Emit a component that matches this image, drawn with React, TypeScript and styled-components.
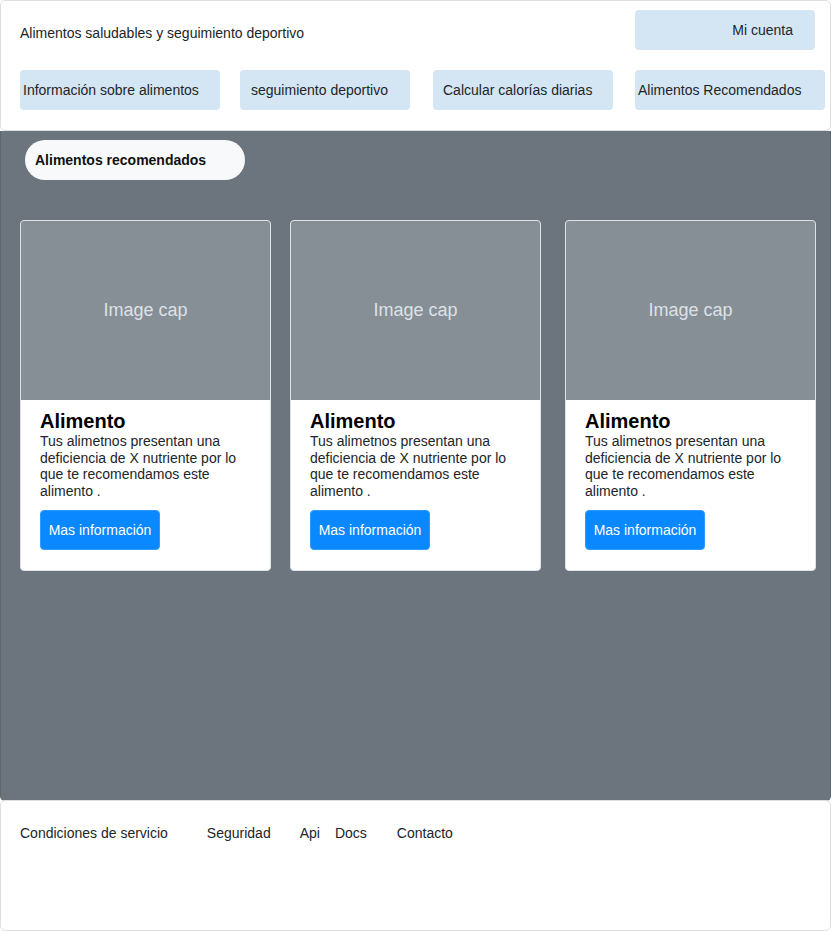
import React from "react";
import styled, { createGlobalStyle } from "styled-components";

const Global = createGlobalStyle`
  html, body { margin: 0; padding: 0; background: #ffffff; }
  body { font-family: "Liberation Sans", Arial, sans-serif; color: #212529; font-size: 14px; }
  * { box-sizing: border-box; }
`;

const Page = styled.div`
  width: 831px;
  display: flex;
  flex-direction: column;
`;

const Header = styled.header`
  height: 131px;
  background: #ffffff;
  border: 1px solid #dcdfe2;
  border-radius: 5px;
  display: flex;
  flex-direction: column;
`;

const TopRow = styled.div`
  display: flex;
  align-items: center;
  justify-content: space-between;
  padding: 9px 15px 0 19px;
  height: 49px;
`;

const Title = styled.div`
  font-size: 14px;
  margin-top: 5px;
`;

const NavRow = styled.nav`
  display: flex;
  margin-top: 20px;
  padding-left: 19px;
`;

const NavButton = styled.div<{ $w: number; $pl: number; $ml: number; $align?: string; $pr?: number }>`
  width: ${(p) => p.$w}px;
  height: 40px;
  margin-left: ${(p) => p.$ml}px;
  padding-left: ${(p) => p.$pl}px;
  padding-right: ${(p) => p.$pr ?? 0}px;
  background: #d4e6f4;
  border-radius: 4px;
  display: flex;
  align-items: center;
  justify-content: ${(p) => p.$align ?? "flex-start"};
  font-size: 14px;
  color: #212529;
  white-space: nowrap;
`;

const Main = styled.main`
  height: 670px;
  background: #6c757d;
  border: 1px solid #5f676e;
  border-top: none;
  border-radius: 0 0 5px 5px;
  padding: 9px 0 0 24px;
  display: flex;
  flex-direction: column;
`;

const Pill = styled.div`
  width: 220px;
  height: 40px;
  border-radius: 20px;
  background: #f8f9fa;
  font-weight: bold;
  font-size: 14px;
  display: flex;
  align-items: center;
  padding-left: 10px;
  color: #111;
`;

const Cards = styled.div`
  display: flex;
  margin-top: 40px;
  margin-left: -5px;
`;

const Card = styled.div<{ $ml: number }>`
  width: 251px;
  height: 351px;
  margin-left: ${(p) => p.$ml}px;
  background: #ffffff;
  border: 1px solid #dfe2e5;
  border-radius: 4px;
  overflow: hidden;
  display: flex;
  flex-direction: column;
`;

const ImageCap = styled.div`
  height: 179px;
  background: #868e96;
  color: #dee2e6;
  font-size: 18px;
  display: flex;
  align-items: center;
  justify-content: center;
`;

const CardBody = styled.div`
  padding: 9px 19px 20px 19px;
  display: flex;
  flex-direction: column;
  align-items: flex-start;
`;

const CardTitle = styled.h5`
  margin: 0;
  font-size: 20px;
  font-weight: bold;
  line-height: 24px;
  color: #000;
`;

const CardText = styled.p`
  margin: 0;
  font-size: 14px;
  line-height: 16.7px;
  color: #212529;
`;

const PrimaryButton = styled.button`
  margin-top: 10px;
  width: 120px;
  height: 40px;
  background: #0a88ff;
  color: #ffffff;
  border: 1px solid #2f9bff;
  border-radius: 4px;
  font-family: "Liberation Sans", Arial, sans-serif;
  font-size: 14px;
  padding: 0;
  cursor: pointer;
`;

const Footer = styled.footer`
  height: 131px;
  background: #ffffff;
  border: 1px solid #dcdfe2;
  border-radius: 5px;
  margin-top: -1px;
  padding: 24px 0 0 19px;
  display: flex;
  align-items: flex-start;
`;

const FooterLink = styled.a<{ $ml: number }>`
  margin-left: ${(p) => p.$ml}px;
  font-size: 14px;
  color: #212529;
  text-decoration: none;
  line-height: 17px;
`;

const navItems = [
  { label: "Información sobre alimentos", w: 200, pl: 3, ml: 0 },
  { label: "seguimiento deportivo", w: 170, pl: 11, ml: 20 },
  { label: "Calcular calorías diarias", w: 180, pl: 10, ml: 23 },
  { label: "Alimentos Recomendados", w: 190, pl: 3, ml: 22 },
];

const cardMargins = [0, 19, 24];

const footerLinks = [
  { label: "Condiciones de servicio", ml: 0 },
  { label: "Seguridad", ml: 39 },
  { label: "Api", ml: 29 },
  { label: "Docs", ml: 15 },
  { label: "Contacto", ml: 30 },
];

export default function App() {
  return (
    <Page>
      <Global />
      <Header>
        <TopRow>
          <Title>Alimentos saludables y seguimiento deportivo</Title>
          <NavButton $w={180} $pl={0} $pr={22} $ml={0} $align="flex-end">
            Mi cuenta
          </NavButton>
        </TopRow>
        <NavRow>
          {navItems.map((n) => (
            <NavButton key={n.label} $w={n.w} $pl={n.pl} $ml={n.ml}>
              {n.label}
            </NavButton>
          ))}
        </NavRow>
      </Header>
      <Main>
        <Pill>Alimentos recomendados</Pill>
        <Cards>
          {cardMargins.map((ml, i) => (
            <Card key={i} $ml={ml}>
              <ImageCap>Image cap</ImageCap>
              <CardBody>
                <CardTitle>Alimento</CardTitle>
                <CardText>
                  Tus alimetnos presentan una deficiencia de X nutriente por lo que te recomendamos este alimento .
                </CardText>
                <PrimaryButton>Mas información</PrimaryButton>
              </CardBody>
            </Card>
          ))}
        </Cards>
      </Main>
      <Footer>
        {footerLinks.map((f) => (
          <FooterLink key={f.label} $ml={f.ml} href="#">
            {f.label}
          </FooterLink>
        ))}
      </Footer>
    </Page>
  );
}
